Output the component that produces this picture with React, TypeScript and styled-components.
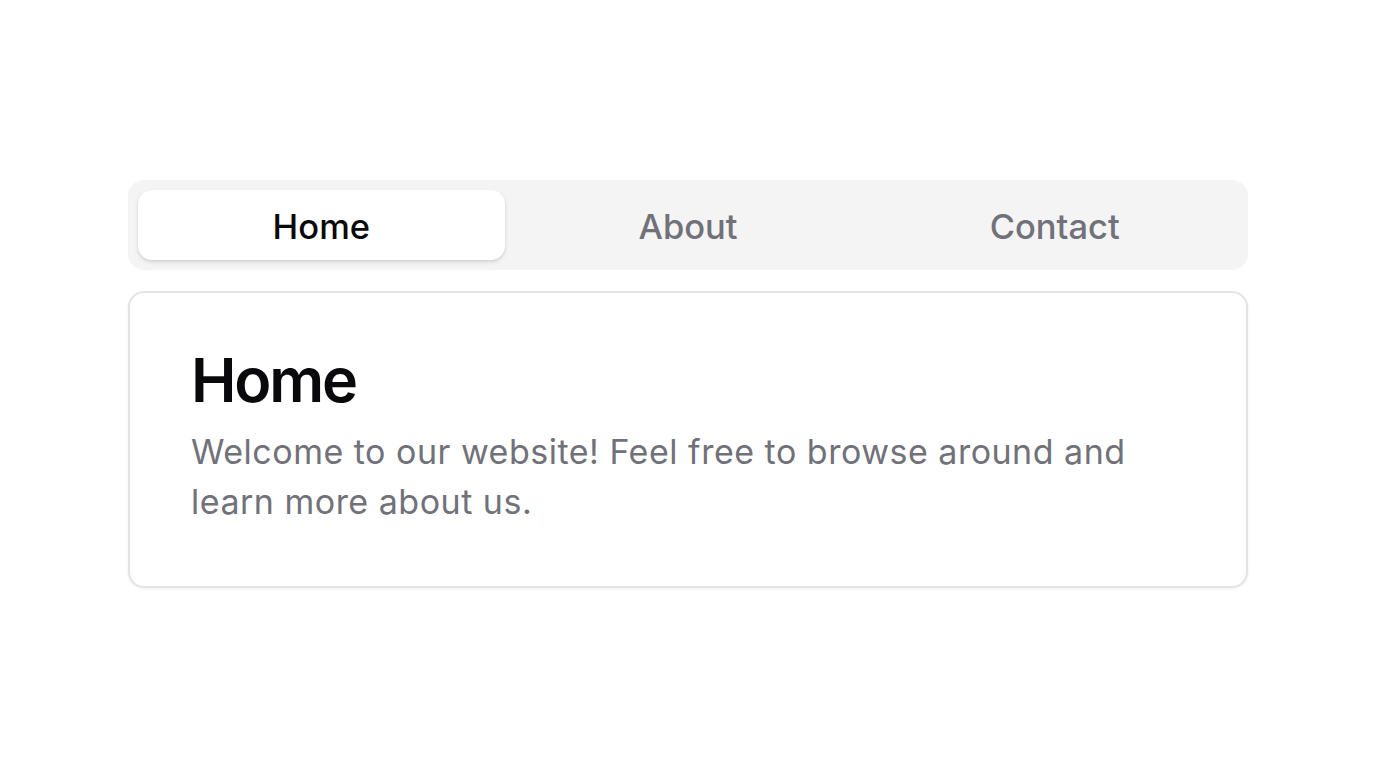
import React, { useState } from "react";
import styled, { createGlobalStyle } from "styled-components";

const Global = createGlobalStyle`
  html, body { margin: 0; padding: 0; background: #ffffff; }
  body {
    font-family: Inter, "Noto Sans", sans-serif;
    -webkit-font-smoothing: antialiased;
  }
  * { box-sizing: border-box; }
`;

const Page = styled.div`
  min-height: 100vh;
  display: flex;
  align-items: center;
  justify-content: center;
`;

const Wrapper = styled.div`
  width: 1120px;
  display: flex;
  flex-direction: column;
  gap: 21px;
`;

const TabList = styled.div`
  display: grid;
  grid-template-columns: repeat(3, 1fr);
  padding: 10px;
  background: #f4f4f5;
  border-radius: 16px;
`;

const Tab = styled.button<{ $active: boolean }>`
  height: 70px;
  padding: 2px 0 0;
  border: none;
  border-radius: 14px;
  font-family: Inter, sans-serif;
  font-size: 34.5px;
  font-weight: 500;
  cursor: pointer;
  background: ${(p) => (p.$active ? "#ffffff" : "transparent")};
  color: ${(p) => (p.$active ? "#09090b" : "#71717a")};
  box-shadow: ${(p) =>
    p.$active ? "0 2px 4px rgba(0,0,0,0.12), 0 1px 2px rgba(0,0,0,0.06)" : "none"};
`;

const Card = styled.div`
  border: 2px solid #e4e4e7;
  border-radius: 16px;
  background: #ffffff;
  padding: 50px 61px 59.4px;
  box-shadow: 0 1px 3px rgba(0,0,0,0.06);
`;

const Title = styled.h2`
  margin: 0 0 8px;
  font-size: 61px;
  line-height: 75.6px;
  font-weight: 600;
  color: #09090b;
  letter-spacing: -2.2px;
`;

const Body = styled.p`
  margin: 0;
  font-size: 34px;
  line-height: 50px;
  letter-spacing: 0.5px;
  color: #71717a;
`;

const tabs = ["Home", "About", "Contact"];
const content: Record<string, string> = {
  Home: "Welcome to our website! Feel free to browse around and learn more about us.",
  About: "Learn more about who we are and what we do.",
  Contact: "Get in touch with us.",
};

export default function App() {
  const [active, setActive] = useState("Home");
  return (
    <Page>
      <Global />
      <Wrapper>
        <TabList>
          {tabs.map((t) => (
            <Tab key={t} $active={t === active} onClick={() => setActive(t)}>
              {t}
            </Tab>
          ))}
        </TabList>
        <Card>
          <Title>{active}</Title>
          <Body>{content[active]}</Body>
        </Card>
      </Wrapper>
    </Page>
  );
}
